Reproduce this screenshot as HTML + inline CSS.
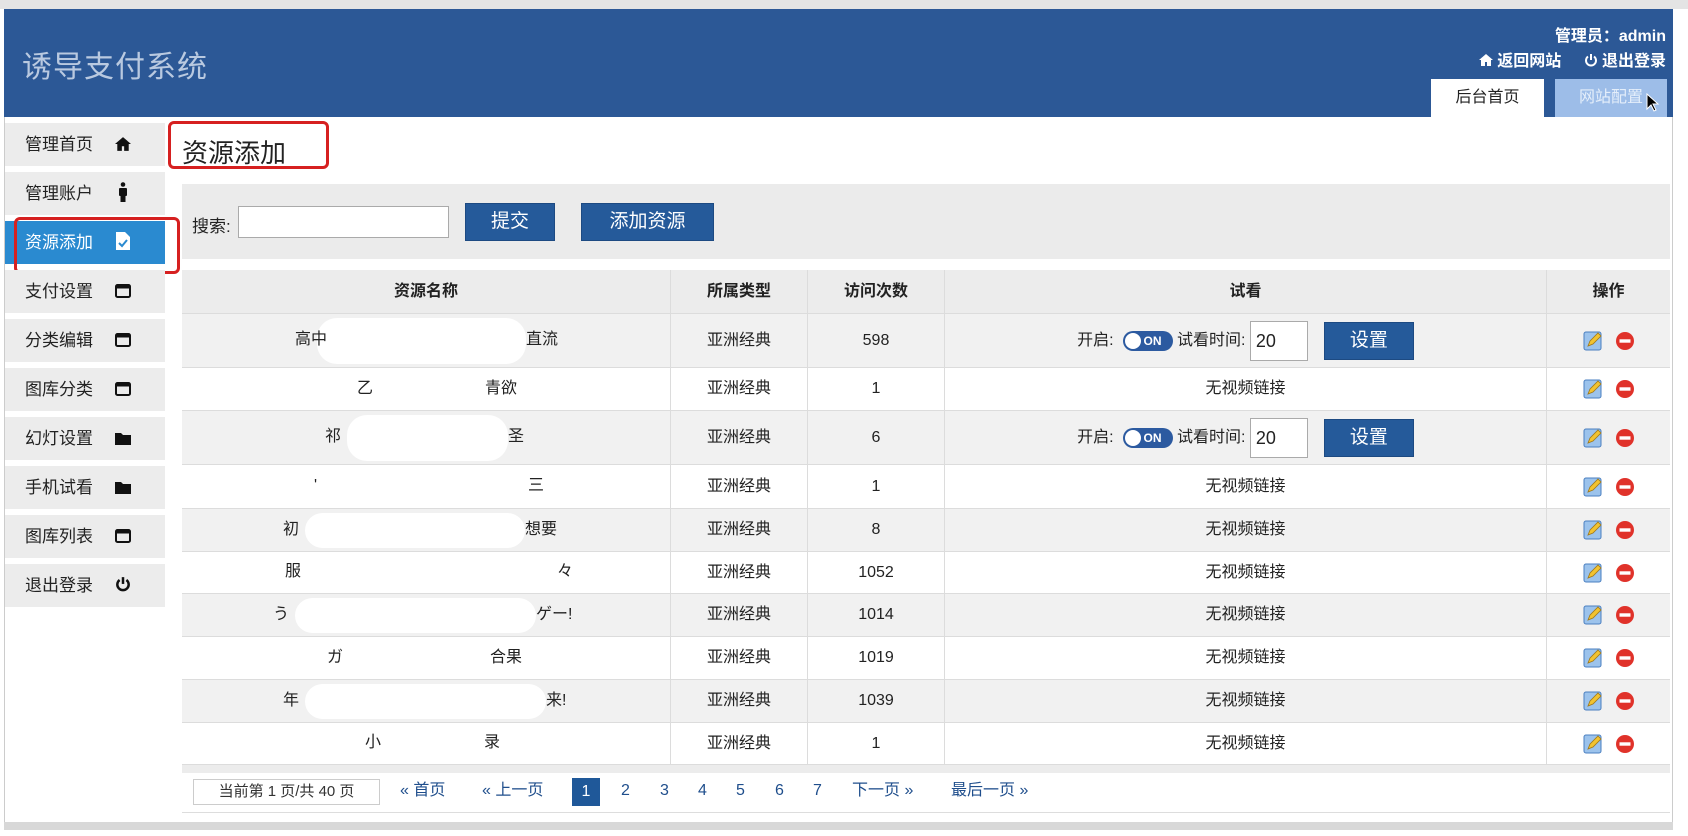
<!DOCTYPE html>
<html><head><meta charset="utf-8">
<style>
*{margin:0;padding:0;box-sizing:border-box}
body{width:1688px;height:836px;background:#fff;position:relative;overflow:hidden;font-family:"Liberation Sans","Noto Sans CJK SC",sans-serif;color:#222}
.a{position:absolute}
.hdr{left:4px;top:9px;width:1669px;height:108px;background:#2c5896}
.side{left:5px;width:160px;height:43px;background:#ececec;font-size:17px;padding-left:20px;line-height:43px;color:#222}
.side i{position:absolute;left:110px;top:0;font-style:normal}
.btn{background:#255a9a;color:#fff;font-size:19px;text-align:center;border:1px solid #1d4a82}
.row{left:182px;width:1488px;border-bottom:1px solid #dcdcdc}
.c{position:absolute;top:0;height:100%;display:flex;align-items:center;justify-content:center;font-size:16px;border-right:1px solid #dcdcdc;line-height:20px}
.blob{position:absolute;background:#fff;border-radius:20px}
.pg{font-size:16px;color:#1f4e8c;top:781px;line-height:20px}
</style></head><body>
<div class="a" style="left:0;top:0;width:1688px;height:9px;background:#e4e4e4"></div>
<div class="a" style="left:4px;top:9px;width:1px;height:815px;background:#ccc"></div>
<div class="a" style="left:1672px;top:9px;width:1px;height:815px;background:#ccc"></div>
<div class="a hdr"></div>
<div class="a" style="left:22px;top:42px;font-size:30px;color:#b9c9e0;letter-spacing:1px">诱导支付系统</div>
<div class="a" style="right:22px;top:22px;font-size:16px;color:#fff;font-weight:bold">管理员：admin</div>
<div class="a" style="right:22px;top:47px;font-size:16px;color:#fff;font-weight:bold">
<svg width="14" height="14" viewBox="0 0 14 14" style="vertical-align:-1px"><path d="M7 1L0 7h2v6h4V9h2v4h4V7h2z" fill="#fff"/></svg> 返回网站 &nbsp;&nbsp;&nbsp;
<svg width="14" height="15" viewBox="0 0 14 15" style="vertical-align:-2px"><path d="M4 3.5A5 5 0 1 0 10 3.5" stroke="#fff" stroke-width="2" fill="none"/><path d="M7 1v6" stroke="#fff" stroke-width="2"/></svg> 退出登录</div>
<div class="a" style="left:1431px;top:79px;width:113px;height:38px;background:#fff;font-size:16px;text-align:center;line-height:38px">后台首页</div>
<div class="a" style="left:1555px;top:79px;width:112px;height:38px;background:#9dbde8;font-size:16px;color:#e4eefa;text-align:center;line-height:38px">网站配置</div>
<svg class="a" style="left:1646px;top:93px" width="14" height="20" viewBox="0 0 14 20"><path d="M1 1v15l4-4 3 6 2-1-3-6h5z" fill="#000" stroke="#fff" stroke-width="1"/></svg>

<div class="a side" style="top:123px">管理首页<i><svg width="16" height="16" viewBox="0 0 14 14" style="vertical-align:-2px"><path d="M7 1L0 7h2v6h4V9h2v4h4V7h2z" fill="#111"/></svg></i></div>
<div class="a side" style="top:172px">管理账户<i><svg width="10" height="20" viewBox="0 0 10 20" style="vertical-align:-3px;margin-left:3px"><circle cx="5" cy="2.5" r="2.3" fill="#111"/><rect x="1" y="6" width="8" height="8" rx="1" fill="#111"/><rect x="2.5" y="13" width="5" height="7" fill="#111"/></svg></i></div>
<div class="a side" style="top:221px;background:#2a8ad0;color:#fff">资源添加<i><svg width="16" height="20" viewBox="0 0 16 20" style="vertical-align:-3px"><path d="M1 1h9l5 5v13H1z" fill="#fff"/><path d="M4 12l3 3 5-6" stroke="#2a8ad0" stroke-width="2" fill="none"/></svg></i></div>
<div class="a" style="left:14px;top:217px;width:166px;height:57px;border:3px solid #d62020;border-radius:6px"></div>
<div class="a side" style="top:270px">支付设置<i><svg width="16" height="14" viewBox="0 0 16 14" style="vertical-align:-1px"><rect x="1" y="1" width="14" height="12" rx="1.5" fill="none" stroke="#111" stroke-width="2"/><rect x="1" y="1" width="14" height="3.5" fill="#111"/></svg></i></div>
<div class="a side" style="top:319px">分类编辑<i><svg width="16" height="14" viewBox="0 0 16 14" style="vertical-align:-1px"><rect x="1" y="1" width="14" height="12" rx="1.5" fill="none" stroke="#111" stroke-width="2"/><rect x="1" y="1" width="14" height="3.5" fill="#111"/></svg></i></div>
<div class="a side" style="top:368px">图库分类<i><svg width="16" height="14" viewBox="0 0 16 14" style="vertical-align:-1px"><rect x="1" y="1" width="14" height="12" rx="1.5" fill="none" stroke="#111" stroke-width="2"/><rect x="1" y="1" width="14" height="3.5" fill="#111"/></svg></i></div>
<div class="a side" style="top:417px">幻灯设置<i><svg width="16" height="13" viewBox="0 0 16 13" style="vertical-align:-1px"><path d="M0 1h6l2 2h8v10H0z" fill="#111"/></svg></i></div>
<div class="a side" style="top:466px">手机试看<i><svg width="16" height="13" viewBox="0 0 16 13" style="vertical-align:-1px"><path d="M0 1h6l2 2h8v10H0z" fill="#111"/></svg></i></div>
<div class="a side" style="top:515px">图库列表<i><svg width="16" height="14" viewBox="0 0 16 14" style="vertical-align:-1px"><rect x="1" y="1" width="14" height="12" rx="1.5" fill="none" stroke="#111" stroke-width="2"/><rect x="1" y="1" width="14" height="3.5" fill="#111"/></svg></i></div>
<div class="a side" style="top:564px">退出登录<i><svg width="16" height="17" viewBox="0 0 14 15" style="vertical-align:-2px"><path d="M4 3.5A5 5 0 1 0 10 3.5" stroke="#111" stroke-width="2.2" fill="none"/><path d="M7 1v6" stroke="#111" stroke-width="2.2"/></svg></i></div>

<div class="a" style="left:182px;top:133px;font-size:26px;color:#222">资源添加</div>
<div class="a" style="left:168px;top:121px;width:161px;height:48px;border:3px solid #d62020;border-radius:6px"></div>

<div class="a" style="left:182px;top:184px;width:1488px;height:75px;background:#ebebeb"></div>
<div class="a" style="left:192px;top:212px;font-size:17px">搜索:</div>
<div class="a" style="left:238px;top:206px;width:211px;height:32px;background:#fff;border:1px solid #aaa"></div>
<div class="a btn" style="left:465px;top:203px;width:90px;height:38px;line-height:36px">提交</div>
<div class="a btn" style="left:581px;top:203px;width:133px;height:38px;line-height:36px">添加资源</div>

<div class="a row" style="top:270px;height:44px;background:#ececec;font-weight:bold">
<div class="c" style="left:0;width:489px">资源名称</div><div class="c" style="left:489px;width:137px">所属类型</div><div class="c" style="left:626px;width:137px">访问次数</div><div class="c" style="left:763px;width:602px">试看</div><div class="c" style="left:1365px;width:123px;border:0">操作</div></div>

<div id="rows"></div>
<script>
var rows=[[314,368,'高中','直流',295,526,598,1],[368,411,'乙','青欲',357,485,1,0],[411,465,'祁','圣',325,508,6,1],[465,509,'\'','三',314,528,1,0],[509,552,'初','想要',283,525,8,0],[552,594,'服','々',285,557,1052,0],[594,637,'う','ゲー!',273,536,1014,0],[637,680,'ガ','合果',327,490,1019,0],[680,723,'年','来!',283,546,1039,0],[723,765,'小','录',365,484,1,0]];
var h='';
rows.forEach(function(r,i){
var bg=i%2==0?'#f1f1f1':'#fff';var ht=r[1]-r[0];
var trial=r[7]?'<span>开启:&nbsp;&nbsp;</span><span style="display:inline-block;width:50px;height:20px;border-radius:10px;background:#2c5aa0;position:relative;vertical-align:middle"><span style="position:absolute;left:2px;top:2px;width:16px;height:16px;border-radius:8px;background:#fff"></span><span style="position:absolute;left:21px;top:3px;font-size:12px;color:#fff;font-weight:bold;line-height:14px">ON</span></span><span>&nbsp;试看时间:&nbsp;</span><span style="display:inline-block;width:58px;height:40px;background:#fff;border:1px solid #aaa;line-height:38px;padding-left:5px;font-size:18px;text-align:left">20</span><span style="display:inline-block;margin-left:16px;width:90px;height:38px;line-height:36px" class="btn">设置</span>':'<span>无视频链接</span>';
h+='<div class="a row" style="top:'+r[0]+'px;height:'+ht+'px;background:'+bg+'">'+
'<div class="c" style="left:0;width:489px"></div>'+
'<div class="blob" style="left:'+(r[4]-182+22)+'px;top:4px;width:'+(r[5]-r[4]-22)+'px;height:'+(ht-8)+'px"></div>'+
'<span class="a" style="left:'+(r[4]-182)+'px;top:'+(ht/2-12)+'px;font-size:16px;line-height:22px">'+r[2]+'</span>'+
'<span class="a" style="left:'+(r[5]-182)+'px;top:'+(ht/2-12)+'px;font-size:16px;line-height:22px">'+r[3]+'</span>'+
'<div class="c" style="left:489px;width:137px"><span>亚洲经典</span></div><div class="c" style="left:626px;width:137px"><span>'+r[6]+'</span></div><div class="c" style="left:763px;width:602px">'+trial+'</div>'+
'<div class="c" style="left:1365px;width:123px;border:0"><svg width="20" height="20" viewBox="0 0 20 20"><rect x="1" y="1" width="17" height="18" rx="2" fill="#9cc3ec" stroke="#4a7fc0"/><path d="M5 15l2-5 8-8 3 3-8 8z" fill="#f2c330" stroke="#a0781a" stroke-width=".8"/></svg><span style="width:12px;display:inline-block"></span><svg width="20" height="20" viewBox="0 0 20 20"><circle cx="10" cy="10" r="9" fill="#e0322a"/><rect x="4.5" y="8.3" width="11" height="3.4" fill="#fff"/></svg></div></div>';
});
document.getElementById('rows').innerHTML=h;
</script>
<div class="a" style="left:182px;top:765px;width:1488px;height:8px;background:#ececec"></div>
<div class="a" style="left:182px;top:773px;width:1488px;height:40px;background:#fff;border-bottom:1px solid #ddd"></div>
<div class="a" style="left:193px;top:779px;width:187px;height:26px;border:1px solid #ccc;color:#333;font-size:15px;line-height:24px;text-align:center">当前第 1 页/共 40 页</div>
<div class="a pg" style="left:400px">« 首页</div>
<div class="a pg" style="left:482px">« 上一页</div>
<div class="a" style="left:572px;top:778px;width:28px;height:28px;background:#1f5899;color:#fff;font-size:16px;text-align:center;line-height:28px">1</div>
<div class="a pg" style="left:621px">2</div>
<div class="a pg" style="left:660px">3</div>
<div class="a pg" style="left:698px">4</div>
<div class="a pg" style="left:736px">5</div>
<div class="a pg" style="left:775px">6</div>
<div class="a pg" style="left:813px">7</div>
<div class="a pg" style="left:852px">下一页 »</div>
<div class="a pg" style="left:951px">最后一页 »</div>
<div class="a" style="left:4px;top:822px;width:1669px;height:8px;background:#d8d8d8"></div>
</body></html>
